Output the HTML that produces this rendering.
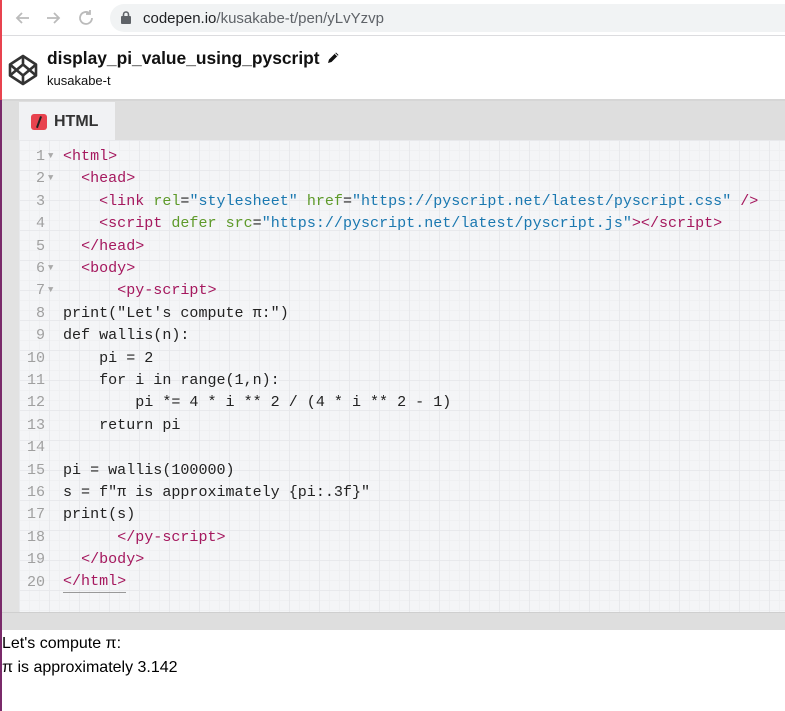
<!DOCTYPE html>
<html><head><meta charset="utf-8"><style>
*{margin:0;padding:0;box-sizing:border-box}
body{width:785px;height:711px;overflow:hidden;background:#fff;font-family:"Liberation Sans",sans-serif;position:relative}
.edge{position:absolute;left:0;top:0;width:2px;height:100px;background:#e8434f}
.edge2{position:absolute;left:0;top:100px;width:2px;height:611px;background:#7a2a6a}
.bar{position:absolute;left:0;top:0;width:785px;height:36px;background:#fff;border-bottom:1px solid #dcdcdf}
.pill{position:absolute;left:110px;top:4px;width:700px;height:28px;border-radius:14px;background:#f1f3f4}
.url{position:absolute;left:143px;top:10px;font-size:15px;color:#202124}
.url span{color:#5f6368}
.hdr{position:absolute;left:0;top:37px;width:785px;height:64px;background:#fff;border-bottom:2px solid #d6d6d6}
.title{position:absolute;left:47px;top:48px;font-size:17.4px;font-weight:bold;color:#111}
.user{position:absolute;left:47px;top:73px;font-size:13px;color:#111}
.tabs{position:absolute;left:0;top:101px;width:785px;height:39px;background:#dedede}
.tab{position:absolute;left:19px;top:102px;width:96px;height:38px;background:#f1f2f4}
.tabt{position:absolute;left:54px;top:113px;font-size:16px;font-weight:bold;color:#333}
.ticon{position:absolute;left:31px;top:114px;width:16px;height:16px;background:#e8434f;border-radius:3px}
.gut{position:absolute;left:0;top:140px;width:19px;height:472px;background:#e2e2e2}
.ed{position:absolute;left:19px;top:140px;width:766px;height:472px;background-color:#f4f5f7;
background-image:linear-gradient(90deg,#e8e9ec 1px,transparent 1px),linear-gradient(#e8e9ec 1px,transparent 1px),linear-gradient(90deg,#eff0f2 1px,transparent 1px),linear-gradient(#eff0f2 1px,transparent 1px);
background-size:30px 30px,30px 30px,10px 10px,10px 10px}
.code{position:absolute;left:0;top:145px;font-family:"Liberation Mono",monospace;font-size:15.05px;line-height:22.4px;white-space:pre}
.ln{position:absolute;left:0;width:45px;text-align:right;color:#a0a0a0}
.ar{position:absolute;left:48px;color:#aaa;font-size:9px}
.c{position:absolute;left:63px;color:#222}
.t{color:#a5185e}.a{color:#5e9a2a}.s{color:#1a78b0}
.strip{position:absolute;left:0;top:612px;width:785px;height:18px;background:#dedede;border-top:1px solid #cfcfcf}
.out{position:absolute;left:2px;top:632px;font-size:16px;line-height:24px;color:#000}
</style></head><body>
<div class="bar"></div>
<svg style="position:absolute;left:14px;top:9px" width="80" height="18" viewBox="0 0 80 18" fill="none" stroke="#bbb" stroke-width="1.8"><path d="M15 9H3M8 4L3 9l5 5"/><path d="M33 9h12M40 4l5 5-5 5"/><path d="M78 9a6 6 0 1 1-2-4.5M76 1v4h-4"/></svg>
<div class="pill"></div>
<svg style="position:absolute;left:121px;top:11px" width="10" height="13" viewBox="0 0 10 13"><rect x="0" y="5" width="10" height="8" rx="1" fill="#5f6368"/><path d="M2.5 5V3.5a2.5 2.5 0 0 1 5 0V5" stroke="#5f6368" stroke-width="1.6" fill="none"/></svg>
<div class="url">codepen.io<span>/kusakabe-t/pen/yLvYzvp</span></div>
<div class="hdr"></div>
<svg style="position:absolute;left:8px;top:54px" width="30" height="32" viewBox="0 0 30 32" fill="none" stroke="#333" stroke-width="2.6" stroke-linejoin="round"><path d="M15 2L28 10.5V21.5L15 30L2 21.5V10.5Z"/><path d="M15 2V10.5M15 21.5V30M2 10.5L15 21.5L28 10.5M2 21.5L15 10.5L28 21.5"/></svg>
<div class="title">display_pi_value_using_pyscript</div>
<svg style="position:absolute;left:326px;top:51px" width="14" height="14" viewBox="0 0 14 14"><path d="M2 12l1-3.5 7-7 2.5 2.5-7 7z" fill="#111"/><path d="M9 2.5l2.5 2.5" stroke="#fff" stroke-width="1"/></svg>
<div class="user">kusakabe-t</div>
<div class="tabs"></div><div class="tab"></div>
<div class="ticon"><div style="position:absolute;left:7px;top:2px;width:1.5px;height:12px;background:#222;transform:rotate(20deg)"></div></div>
<div class="tabt">HTML</div>
<div class="gut"></div><div class="ed"></div>
<div class="code">
<div class="ln" style="top:0">1</div><div class="ar" style="top:0">▼</div><div class="c" style="top:0"><span class="t">&lt;html&gt;</span></div>
<div class="ln" style="top:22.4px">2</div><div class="ar" style="top:22.4px">▼</div><div class="c" style="top:22.4px">  <span class="t">&lt;head&gt;</span></div>
<div class="ln" style="top:44.8px">3</div><div class="c" style="top:44.8px">    <span class="t">&lt;link</span> <span class="a">rel</span>=<span class="s">"stylesheet"</span> <span class="a">href</span>=<span class="s">"https://pyscript.net/latest/pyscript.css"</span> <span class="t">/&gt;</span></div>
<div class="ln" style="top:67.2px">4</div><div class="c" style="top:67.2px">    <span class="t">&lt;script</span> <span class="a">defer</span> <span class="a">src</span>=<span class="s">"https://pyscript.net/latest/pyscript.js"</span><span class="t">&gt;&lt;/script&gt;</span></div>
<div class="ln" style="top:89.6px">5</div><div class="c" style="top:89.6px">  <span class="t">&lt;/head&gt;</span></div>
<div class="ln" style="top:112px">6</div><div class="ar" style="top:112px">▼</div><div class="c" style="top:112px">  <span class="t">&lt;body&gt;</span></div>
<div class="ln" style="top:134.4px">7</div><div class="ar" style="top:134.4px">▼</div><div class="c" style="top:134.4px">      <span class="t">&lt;py-script&gt;</span></div>
<div class="ln" style="top:156.8px">8</div><div class="c" style="top:156.8px">print("Let's compute π:")</div>
<div class="ln" style="top:179.2px">9</div><div class="c" style="top:179.2px">def wallis(n):</div>
<div class="ln" style="top:201.6px">10</div><div class="c" style="top:201.6px">    pi = 2</div>
<div class="ln" style="top:224px">11</div><div class="c" style="top:224px">    for i in range(1,n):</div>
<div class="ln" style="top:246.4px">12</div><div class="c" style="top:246.4px">        pi *= 4 * i ** 2 / (4 * i ** 2 - 1)</div>
<div class="ln" style="top:268.8px">13</div><div class="c" style="top:268.8px">    return pi</div>
<div class="ln" style="top:291.2px">14</div>
<div class="ln" style="top:313.6px">15</div><div class="c" style="top:313.6px">pi = wallis(100000)</div>
<div class="ln" style="top:336px">16</div><div class="c" style="top:336px">s = f"π is approximately {pi:.3f}"</div>
<div class="ln" style="top:358.4px">17</div><div class="c" style="top:358.4px">print(s)</div>
<div class="ln" style="top:380.8px">18</div><div class="c" style="top:380.8px">      <span class="t">&lt;/py-script&gt;</span></div>
<div class="ln" style="top:403.2px">19</div><div class="c" style="top:403.2px">  <span class="t">&lt;/body&gt;</span></div>
<div class="ln" style="top:425.6px">20</div><div class="c" style="top:425.6px;border-bottom:1px solid #999;line-height:21px"><span class="t">&lt;/html&gt;</span></div>
</div>
<div class="strip"></div>
<div class="out">Let's compute π:<br>π is approximately 3.142</div>
<div class="edge"></div><div class="edge2"></div>
</body></html>
